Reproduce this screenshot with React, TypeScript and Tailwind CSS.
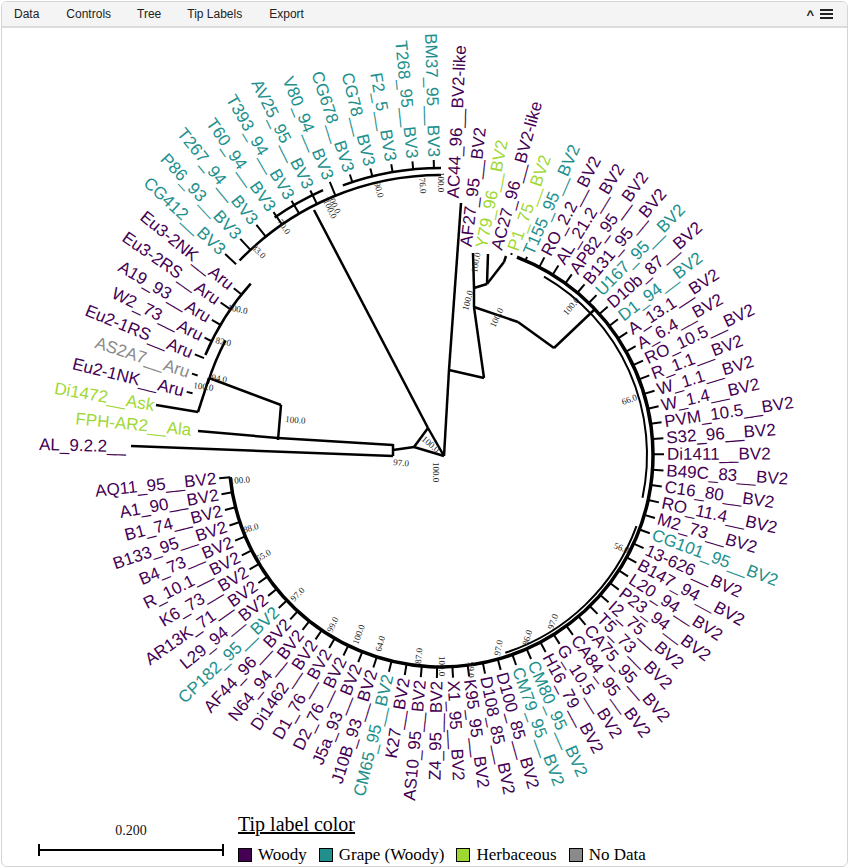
import React from 'react';

const CX = 440;
const CY = 455;
const W = '#440154';
const G = '#21908c';
const H = '#a0d832';
const N = '#8a8a8a';

type Leaf = { name: string; c: string; r: number };

const bv3 = (name: string): Leaf => ({ name, c: G, r: 295 });
const bv2 = (name: string, c = W, r = 223): Leaf => ({ name, c, r });

const leaves: Leaf[] = [
  { name: 'AL_9.2.2__', c: W, r: 312 },
  { name: 'FPH-AR2__Ala', c: H, r: 248 },
  { name: 'Di1472__Ask', c: H, r: 288 },
  { name: 'Eu2-1NK__Aru', c: W, r: 262 },
  { name: 'AS2A7__Aru', c: N, r: 262 },
  { name: 'Eu2-1RS__Aru', c: W, r: 266 },
  { name: 'W2_73__Aru', c: W, r: 264 },
  { name: 'A19_93__Aru', c: W, r: 266 },
  { name: 'Eu3-2RS__Aru', c: W, r: 268 },
  { name: 'Eu3-2NK__Aru', c: W, r: 266 },
  bv3('CG412__BV3'),
  bv3('P86_93__BV3'),
  bv3('T267_94__BV3'),
  bv3('T60_94__BV3'),
  bv3('T393_94__BV3'),
  bv3('AV25_95__BV3'),
  bv3('V80_94__BV3'),
  bv3('CG678__BV3'),
  bv3('CG78__BV3'),
  bv3('F2_5__BV3'),
  bv3('T268_95__BV3'),
  bv3('BM37_95__BV3'),
  { name: 'AC44_96__BV2-like', c: W, r: 254 },
  bv2('AF27_95__BV2', W, 207),
  bv2('Y79_96__BV2', H, 208),
  bv2('AC27_96__BV2-like', W, 210),
  bv2('P1_75__BV2', H, 214),
  bv2('T155_95__BV2', G, 216),
  bv2('RO_2.2__BV2'),
  bv2('AL_21.2__BV2'),
  bv2('AP82_95__BV2'),
  bv2('B131_95__BV2'),
  bv2('U167_95__BV2', G),
  bv2('D10b_87__BV2'),
  bv2('D1_94__BV2', G),
  bv2('A_13.1__BV2'),
  bv2('A_6.4__BV2'),
  bv2('RO_10.5__BV2'),
  bv2('R_1.1__BV2'),
  bv2('W_1.1__BV2'),
  bv2('W_1.4__BV2'),
  bv2('PVM_10.5__BV2'),
  bv2('S32_96__BV2'),
  bv2('Di1411__BV2'),
  bv2('B49C_83__BV2'),
  bv2('C16_80__BV2'),
  bv2('RO_11.4__BV2'),
  bv2('M2_73__BV2'),
  bv2('CG101_95__BV2', G),
  bv2('13-626__BV2'),
  bv2('B147_94__BV2'),
  bv2('L20_94__BV2'),
  bv2('P23_94__BV2'),
  bv2('I2_75__BV2'),
  bv2('T5_73__BV2'),
  bv2('CA75_95__BV2'),
  bv2('CA84_95__BV2'),
  bv2('G_10.5__BV2'),
  bv2('H16_79__BV2'),
  bv2('CM80_95__BV2', G),
  bv2('CM79_95__BV2', G),
  bv2('D100_85__BV2'),
  bv2('D108_85__BV2'),
  bv2('K95_95__BV2'),
  bv2('X1_95__BV2'),
  bv2('Z4_95__BV2'),
  bv2('AS10_95__BV2'),
  bv2('K27__BV2'),
  bv2('CM65_95__BV2', G),
  bv2('J10B_93__BV2'),
  bv2('J5a_93__BV2'),
  bv2('D2_76__BV2'),
  bv2('D1_76__BV2'),
  bv2('Di1462__BV2'),
  bv2('N64_94__BV2'),
  bv2('AF44_96__BV2'),
  bv2('CP182_95__BV2', G),
  bv2('L29_94__BV2'),
  bv2('AR13K_71__BV2'),
  bv2('K6_73__BV2'),
  bv2('R_10.1__BV2'),
  bv2('B4_73__BV2'),
  bv2('B133_95__BV2'),
  bv2('B1_74__BV2'),
  bv2('A1_90__BV2'),
  bv2('AQ11_95__BV2'),
];

const START = 181.5;
const STEP = (534 - 181.5) / (leaves.length - 1);
const rad = (d: number) => (d * Math.PI) / 180;
const pt = (r: number, a: number) => [CX + r * Math.cos(rad(a)), CY + r * Math.sin(rad(a))];

function arc(r: number, a1: number, a2: number) {
  const [x1, y1] = pt(r, a1);
  const [x2, y2] = pt(r, a2);
  const large = a2 - a1 > 180 ? 1 : 0;
  return `M${x1} ${y1} A${r} ${r} 0 ${large} 1 ${x2} ${y2}`;
}

// internal branches read off the picture (page coordinates)
const segs: number[][] = [
  [392, 450, 413, 447], [413, 447, 427, 428], [427, 428, 443, 456], [413, 447, 443, 456],
  [427, 428, 313, 210],
  [392, 444, 392, 456], [392, 456, 130, 446], [392, 445, 277, 438],
  [280, 405, 277, 440], [277, 438, 197, 431], [280, 405, 208, 378],
  [208, 378, 197, 412], [197, 412, 155, 405],
  [443, 456, 448, 370], [448, 370, 483, 378], [448, 370, 460, 203],
  [483, 378, 473, 307], [473, 307, 517, 322], [517, 322, 553, 348], [553, 348, 593, 310],
  [473, 307, 473, 288], [473, 288, 486, 284], [473, 288, 472, 253], [486, 284, 487, 254], [486, 284, 503, 262],
  [503, 262, 505, 256],
];

const boot: [number, number, number, string][] = [
  [226, 310, 12, '100.0'], [214, 343, 12, '82.0'], [210, 380, 10, '94.0'], [192, 388, 8, '100.0'],
  [284, 422, 5, '100.0'], [392, 465, 5, '97.0'], [420, 440, 40, '100.0'], [432, 462, 90, '100.0'],
  [250, 248, 45, '83.0'], [276, 222, 55, '70.0'], [322, 201, 65, '100.0'], [326, 196, 65, '100.0'],
  [373, 183, 75, '90.0'], [418, 178, 85, '76.0'], [437, 172, 90, '100.0'],
  [476, 273, -80, '100.0'], [467, 311, -75, '100.0'], [494, 328, -65, '100.0'], [566, 316, -50, '100.0'],
  [622, 405, -20, '66.0'], [612, 548, 20, '56.0'], [552, 630, -70, '97.0'], [527, 646, -75, '86.0'],
  [499, 656, -80, '97.0'], [467, 662, 90, '99.0'], [438, 656, 90, '100.0'], [420, 664, -85, '87.0'],
  [380, 652, -75, '64.0'], [357, 645, -70, '100.0'], [331, 633, -65, '99.0'], [293, 602, -45, '97.0'],
  [257, 562, -30, '55.0'], [243, 533, -15, '88.0'], [229, 484, -5, '100.0'],
];

function Tree() {
  return (
    <svg width="847" height="800" viewBox="1 28 847 800" className="block">
      <g stroke="#000" fill="none" strokeWidth={2.5}>
        {segs.map((s, i) => (
          <line key={i} x1={s[0]} y1={s[1]} x2={s[2]} y2={s[3]} />
        ))}
        <path d={arc(212, 291, 534)} strokeWidth={3.5} />
        <path d={arc(206, 300, 372)} strokeWidth={2} />
        <path d={arc(208, 380, 432)} strokeWidth={2} />
        <path d={arc(280, 224, 270)} />
        <path d={arc(287, 250, 270)} />
        <path d={arc(290, 235, 246)} />
        <path d={arc(244, 197, 208)} />
        <path d={arc(256, 203, 222)} />
        {leaves.map((l, i) => {
          const a = START + i * STEP;
          if (i < 3 || i === 22 || (i > 22 && i < 26)) return null;
          const inner = i < 10 ? 256 : i < 22 ? (i > 16 ? 287 : 280) : 212;
          const [x1, y1] = pt(inner, a);
          const [x2, y2] = pt(l.r, a);
          return <line key={i} x1={x1} y1={y1} x2={x2} y2={y2} strokeWidth={2} />;
        })}
      </g>
      {leaves.map((l, i) => {
        const a = START + i * STEP;
        const [x, y] = pt(l.r + 3, a);
        const norm = ((a % 360) + 360) % 360;
        const flip = norm > 90 && norm < 270;
        return (
          <text
            key={l.name}
            x={x}
            y={y}
            fill={l.c}
            fontSize={17}
            fontFamily="'Liberation Sans', Arial, sans-serif"
            dominantBaseline="central"
            textAnchor={flip ? 'end' : 'start'}
            transform={`rotate(${flip ? norm - 180 : norm} ${x} ${y})`}
          >
            {l.name}
          </text>
        );
      })}
      {boot.map(([x, y, r, t], i) => (
        <text
          key={i}
          x={x}
          y={y}
          fontSize={9}
          fill="#222"
          fontFamily="'Liberation Serif', serif"
          transform={`rotate(${r} ${x} ${y})`}
        >
          {t}
        </text>
      ))}
    </svg>
  );
}

const legend = [
  { label: 'Woody', c: W },
  { label: 'Grape (Woody)', c: G },
  { label: 'Herbaceous', c: H },
  { label: 'No Data', c: N },
];

export default function App() {
  return (
    <div className="w-[849px] h-[868px] bg-white p-px">
      <div className="h-full rounded-md border border-[#d4d4d4] overflow-hidden flex flex-col" style={{ fontFamily: "'Liberation Sans', Arial, sans-serif" }}>
        <div className="h-[26px] shrink-0 bg-[#f4f4f4] border-b-2 border-[#dcdcdc] flex items-center text-[12px] text-[#222]">
          <span className="ml-[12px]">Data</span>
          <span className="ml-[27px]">Controls</span>
          <span className="ml-[26px]">Tree</span>
          <span className="ml-[26px]">Tip Labels</span>
          <span className="ml-[27px]">Export</span>
          <span className="ml-auto font-bold text-[13px] leading-none">^</span>
          <span className="ml-[6px] mr-[14px] flex flex-col gap-[2px]">
            <span className="block w-[13px] h-[2px] bg-[#222]" />
            <span className="block w-[13px] h-[2px] bg-[#222]" />
            <span className="block w-[13px] h-[2px] bg-[#222]" />
          </span>
        </div>
        <div className="flex-1 relative">
          <Tree />
          <div className="absolute left-[36px] top-[796px] w-[186px]">
            <div className="text-center text-[14px] text-[#111] leading-none" style={{ fontFamily: "'Liberation Serif', serif" }}>0.200</div>
            <div className="mt-[6px] h-[12px] border-x-2 border-black flex items-center">
              <div className="w-full h-[2px] bg-black" />
            </div>
          </div>
          <div className="absolute left-[236px] top-[786px]" style={{ fontFamily: "'Liberation Serif', serif" }}>
            <div className="text-[20px] underline leading-none text-black">Tip label color</div>
            <div className="mt-[8px] flex items-center gap-[12px] text-[17px] text-black">
              {legend.map((l) => (
                <span key={l.label} className="flex items-center gap-[6px]">
                  <span className="inline-block w-[14px] h-[14px] border border-black" style={{ backgroundColor: l.c }} />
                  {l.label}
                </span>
              ))}
            </div>
          </div>
        </div>
      </div>
    </div>
  );
}
